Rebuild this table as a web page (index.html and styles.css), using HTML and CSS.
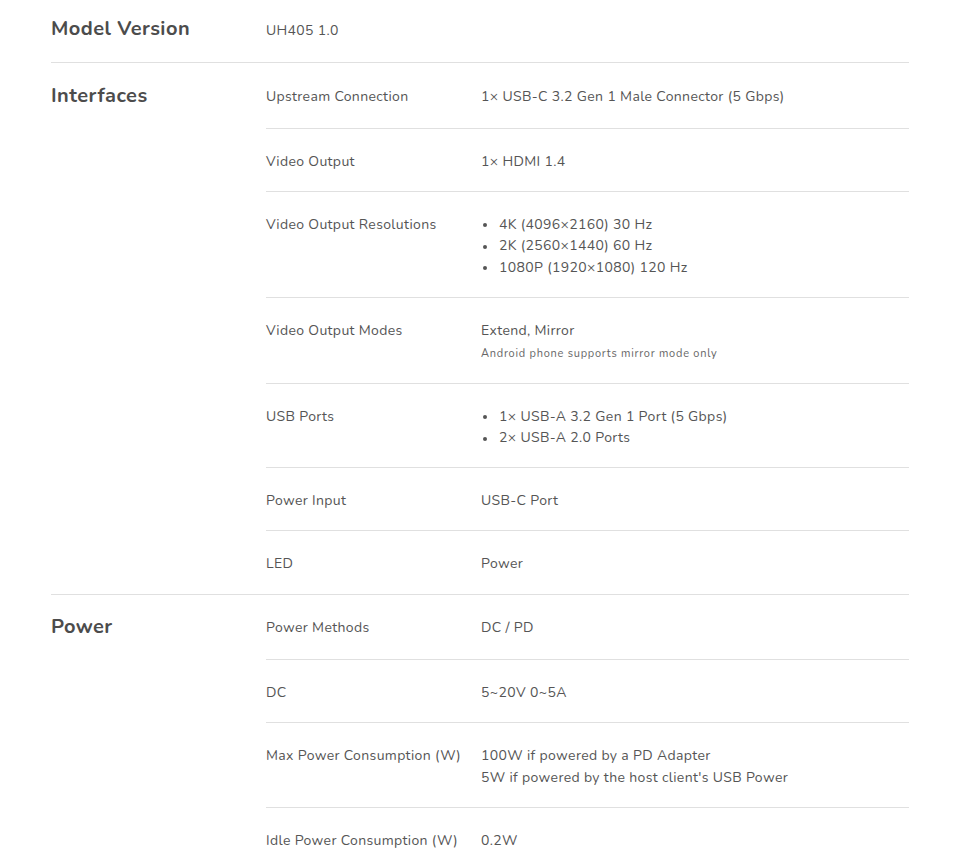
FILE: index.html
```html
<!DOCTYPE html>
<html lang="en">
<head>
    <meta charset="UTF-8">
    <meta name="viewport" content="width=device-width, initial-scale=1.0">
    <title>UH405 Specifications</title>
    <link rel="stylesheet" href="styles.css">
</head>
<body>
    <div class="specs">
        <section class="spec-group">
            <h2 class="group-title">Model Version</h2>
            <div class="group-rows">
                <div class="row single">
                    <div class="value">UH405 1.0</div>
                </div>
            </div>
        </section>

        <section class="spec-group">
            <h2 class="group-title">Interfaces</h2>
            <div class="group-rows">
                <div class="row">
                    <div class="label">Upstream Connection</div>
                    <div class="value">1× USB-C 3.2 Gen 1 Male Connector (5 Gbps)</div>
                </div>
                <div class="row">
                    <div class="label">Video Output</div>
                    <div class="value">1× HDMI 1.4</div>
                </div>
                <div class="row">
                    <div class="label">Video Output Resolutions</div>
                    <ul class="value list">
                        <li>4K (4096×2160) 30 Hz</li>
                        <li>2K (2560×1440) 60 Hz</li>
                        <li>1080P (1920×1080) 120 Hz</li>
                    </ul>
                </div>
                <div class="row">
                    <div class="label">Video Output Modes</div>
                    <div class="value">
                        Extend, Mirror
                        <span class="note">Android phone supports mirror mode only</span>
                    </div>
                </div>
                <div class="row">
                    <div class="label">USB Ports</div>
                    <ul class="value list">
                        <li>1× USB-A 3.2 Gen 1 Port (5 Gbps)</li>
                        <li>2× USB-A 2.0 Ports</li>
                    </ul>
                </div>
                <div class="row">
                    <div class="label">Power Input</div>
                    <div class="value">USB-C Port</div>
                </div>
                <div class="row">
                    <div class="label">LED</div>
                    <div class="value">Power</div>
                </div>
            </div>
        </section>

        <section class="spec-group">
            <h2 class="group-title">Power</h2>
            <div class="group-rows">
                <div class="row">
                    <div class="label">Power Methods</div>
                    <div class="value">DC / PD</div>
                </div>
                <div class="row">
                    <div class="label">DC</div>
                    <div class="value">5~20V 0~5A</div>
                </div>
                <div class="row">
                    <div class="label">Max Power Consumption (W)</div>
                    <div class="value">100W if powered by a PD Adapter<br>5W if powered by the host client's USB Power</div>
                </div>
                <div class="row">
                    <div class="label">Idle Power Consumption (W)</div>
                    <div class="value">0.2W</div>
                </div>
            </div>
        </section>
    </div>
</body>
</html>
```

FILE: styles.css
```css
body {
    margin: 0;
    font-family: "Nunito", Lato, "Noto Sans", sans-serif;
    color: #555;
    background: #fff;
}
.specs {
    width: 858px;
    margin-left: 51px;
}
.spec-group {
    display: grid;
    grid-template-columns: 215px 1fr;
    padding-top: 2.6px;
    border-bottom: 1px solid #e0e0e0;
}
.spec-group:first-child {
    padding-top: 0;
}
.group-title {
    margin: 0;
    padding-top: 18px;
    font-size: 20px;
    line-height: 22px;
    font-weight: 700;
    color: #4c4c4c;
    letter-spacing: 0.45px;
}
.spec-group + .spec-group .group-title {
    padding-top: 19px;
}
.row {
    display: grid;
    grid-template-columns: 215px 1fr;
    padding: 22px 0 18px;
    font-size: 14px;
    line-height: 22px;
    letter-spacing: 0.35px;
    border-bottom: 1px solid #e0e0e0;
}
.row:last-child {
    padding-bottom: 19px;
    border-bottom: none;
}
.row:first-child {
    padding: 20px 0;
}
.row.single {
    grid-template-columns: 1fr;
}
.list {
    margin: 0;
    padding: 0;
    list-style: none;
}
.list li {
    display: flex;
    align-items: center;
    line-height: 21.65px;
}
.list li::before {
    content: "";
    width: 4px;
    height: 4px;
    margin: 1px 12px 0 2px;
    border-radius: 50%;
    background: #555;
}
.note {
    display: block;
    font-size: 11px;
    line-height: 23px;
    letter-spacing: 0.75px;
    color: #666;
}
```
